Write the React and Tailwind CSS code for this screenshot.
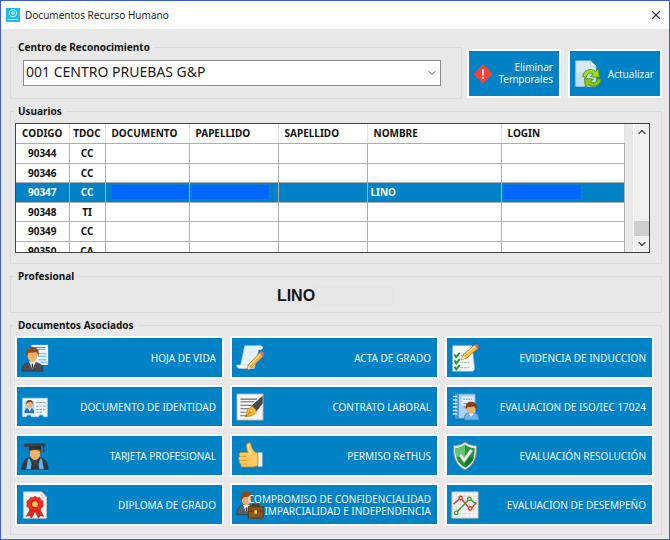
import { ChevronDown, ChevronUp, X } from 'lucide-react';

const COLUMNS = [
  { key: 'codigo', label: 'CODIGO', width: 'w-[53px]', head: 'text-center', cell: 'text-center' },
  { key: 'tdoc', label: 'TDOC', width: 'w-9', head: 'text-center', cell: 'text-center' },
  { key: 'documento', label: 'DOCUMENTO', width: 'w-[84px]', head: 'pl-1.5 text-left', cell: 'pl-1.5' },
  { key: 'papellido', label: 'PAPELLIDO', width: 'w-[89px]', head: 'pl-1.5 text-left', cell: 'pl-0.5' },
  { key: 'sapellido', label: 'SAPELLIDO', width: 'w-[89px]', head: 'pl-1.5 text-left', cell: 'pl-0.5' },
  { key: 'nombre', label: 'NOMBRE', width: 'w-[134px]', head: 'pl-1.5 text-left', cell: 'pl-[3px]' },
  { key: 'login', label: 'LOGIN', width: '', head: 'pl-1.5 text-left', cell: 'pl-0.5' },
];

const USERS = [
  { codigo: '90344', tdoc: 'CC' },
  { codigo: '90346', tdoc: 'CC' },
  { codigo: '90347', tdoc: 'CC', nombre: 'LINO', selected: true },
  { codigo: '90348', tdoc: 'TI' },
  { codigo: '90349', tdoc: 'CC' },
  { codigo: '90350', tdoc: 'CA' },
];

const MASKED = ['documento', 'papellido', 'login'];

function Icon({ children }) {
  return (
    <svg viewBox="0 0 32 32" className="size-7 shrink-0" aria-hidden="true">
      {children}
    </svg>
  );
}

function RefreshPageIcon() {
  return (
    <Icon>
      <path d="M2 1h17l6 6v23H2z" fill="#d9ebf8" stroke="#a9cbe4" />
      <path d="M19 1v6h6z" fill="#fff" stroke="#8fb6d4" strokeWidth=".7" />
      <path d="M2 14c8 2 14-2 23-1v17H2z" fill="#bcd9ee" opacity=".7" />
      <path d="M10 19c1-8 9-10 15-6l3-3 1 10-10-1 3-3c-4-2-7-1-8 4z" fill="#a5d92a" stroke="#4d8a10" />
      <path d="M31 22c-1 8-9 10-15 6l-3 3-1-10 10 1-3 3c4 2 7 1 8-4z" fill="#8ac61a" stroke="#4d8a10" />
    </Icon>
  );
}

function WarningIcon() {
  return (
    <svg viewBox="0 0 20 20" className="size-5 shrink-0" aria-hidden="true">
      <path d="M10 0.8 19.2 10 10 19.2 0.8 10z" fill="#f44336" stroke="#f44336" strokeLinejoin="round" />
      <path d="M9 5.2h2l-.3 6.2H9.3z" fill="#fff" />
      <circle cx="10" cy="13.8" r="1.1" fill="#fff" />
    </svg>
  );
}

function ResumeIcon() {
  return (
    <Icon>
      <path d="M12 1h19v23H12z" fill="#f1f9ff" />
      <path d="M15 4h13M15 6h13" stroke="#3aa3e8" strokeWidth="1.4" />
      <path d="M19 11h10M19 14h10M20 18h9M22 21h7" stroke="#7fc3f2" strokeWidth="1.6" />
      <path d="M1 31c0-7 3-9 8-10h8c5 1 8 3 8 10z" fill="#4a4d52" stroke="#2c2e31" strokeWidth=".7" />
      <path d="m9 20 4 9 4-9z" fill="#f4f4f4" />
      <path d="m13 22-1 2 1 6 1-6z" fill="#26282b" />
      <ellipse cx="13" cy="13" rx="5.5" ry="7.5" fill="#f0b26b" />
      <path d="M6 14C5 6 9 3 13 3s9 3 7 11c-1-2-2-4-3-5-3 1-6 1-8 1-1 1-2 2-3 4z" fill="#8a4b1c" />
    </Icon>
  );
}

function IdCardIcon() {
  return (
    <Icon>
      <path d="M2 6h28v21h-4l-1-2h-4l-1 2h-8l-1-2H7l-1 2H2z" fill="#eef7fd" stroke="#b9d6ea" />
      <path d="M4 9h11v14H4z" fill="#a9d5f3" />
      <path d="M4 23c0-5 2-6 5.5-6s5.5 1 5.5 6z" fill="#2474b5" />
      <path d="m8 17 2 4 2-4z" fill="#fff" />
      <circle cx="9.7" cy="13" r="3.3" fill="#efb172" />
      <path d="M6 13c0-4 1-5 4-5s4 2 3.5 5c-1-2-2-3-3-3-2 0-3 1-4.5 3z" fill="#7a431b" />
      <path d="M17 11h11M17 15h11M17 19h11M17 22h7" stroke="#7f9db5" strokeWidth="1.1" strokeDasharray="3 1" />
    </Icon>
  );
}

function GraduateIcon() {
  return (
    <Icon>
      <path d="M1 31c1-8 3-12 9-13h12c6 1 8 5 9 13z" fill="#34373b" stroke="#222" strokeWidth=".6" />
      <path d="M8 19 6 31h5l1-6-2-6zM24 19l2 12h-5l-1-6 2-6z" fill="#5db4ec" />
      <path d="m11 18 5 9 5-9z" fill="#3f4348" />
      <ellipse cx="16" cy="13" rx="6" ry="7.5" fill="#efb46c" />
      <path d="M9 14V6h14v8l-2-4c-3-1-7-1-10 0z" fill="#7e451b" />
      <path d="M9 4h14v5c-3-1-11-1-14 0z" fill="#2b2d30" />
      <path d="M3 2 27 1l1 3-24 2z" fill="#3c3f43" />
      <path d="M26 3v8" stroke="#333" strokeWidth="1.5" />
    </Icon>
  );
}

function DiplomaIcon() {
  return (
    <Icon>
      <path d="M3 1h21l5 6v24H3z" fill="#f5f5f3" stroke="#c9c9c9" />
      <path d="M24 1v6h5z" fill="#fff" stroke="#aaa" strokeWidth=".7" />
      <path d="m11 20-5 9 4-1 2 3 4-8 4 8 2-3 4 1-5-9z" fill="#e02619" stroke="#b51710" strokeWidth=".6" />
      <path
        d="m16 6 2.5 1.8 3-.3 1.3 2.8 2.6 1.5-.3 3 .3 3-2.6 1.5-1.3 2.8-3-.3L16 23.5l-2.5-1.7-3 .3-1.3-2.8L6.6 17.8l.3-3-.3-3 2.6-1.5 1.3-2.8 3 .3z"
        fill="#ee2e20"
        stroke="#c01a12"
        strokeWidth=".7"
      />
      <circle cx="16" cy="15" r="5" fill="#cf1f14" />
      <circle cx="16" cy="15" r="3.4" fill="#ffc43a" />
    </Icon>
  );
}

function ScrollIcon() {
  return (
    <Icon>
      <path d="M10 2h18c3 0 3 4 1 4h-3l-5 21H7l-2-2z" fill="#e4f2fb" stroke="#a8cce4" strokeWidth=".8" />
      <path d="M10 2h18c3 0 3 4 1 4h-4c2 0 1-4-1-4z" fill="#fff" />
      <path d="M1 24h16c0 3 1 4 4 4H5c-3 0-4-1-4-4z" fill="#fff" stroke="#a8cce4" strokeWidth=".8" />
      <path d="M11 9h11M10 13h9M9 17h7" stroke="#d3e8f5" />
      <path d="m12 30 2-6L27 10l4 4-13 13z" fill="#f8b440" stroke="#a86a1c" strokeWidth=".8" />
      <path d="m15 25 13-14" stroke="#ffe08e" strokeWidth="1.2" />
      <path d="m27 10 2-2 4 3-2 3z" fill="#e8697b" />
      <path d="m12 30 2-5 3 3z" fill="#f7dfb8" />
      <path d="m12 30 .8-2 1.2 1z" fill="#333" />
    </Icon>
  );
}

function ContractIcon() {
  return (
    <Icon>
      <path d="M1 1h30v30H1z" fill="#f6f6f6" stroke="#9a9a9a" />
      <path d="M5 7h19M5 10h16M5 14h14M5 18h11M5 22h6M5 26h7" stroke="#686868" strokeWidth="1.3" />
      <path d="m18 15 12-11v8l-7 9z" fill="#45484c" stroke="#26282a" strokeWidth=".7" />
      <path d="m11 27 2-8 6-4 5 6-5 5z" fill="#fbb62d" stroke="#b97913" strokeWidth=".8" />
      <path d="m11 27 6-6" stroke="#9a6410" />
      <circle cx="17.5" cy="20.5" r="1.2" fill="#fff" />
    </Icon>
  );
}

function ThumbIcon() {
  return (
    <Icon>
      <path d="M25 12h5v16h-5z" fill="#eef1f4" stroke="#aeb7c0" strokeWidth=".7" />
      <path
        d="M25 13c-4-1-7-4-8-11-1-2-5-1-5 2 0 4 1 6 2 8H6c-3 0-3 4-1 4.5-3 .5-3 4 0 4.5-2 .5-2 3.500 1 4-1 1-1 3.500 2 3.500h11c3 0 4-1.500 6-1.500z"
        fill="#ffc95e"
        stroke="#d3892a"
        strokeWidth=".8"
      />
      <path d="M5 16.5h7M5 21h7M6 25h6" stroke="#dc9634" strokeWidth=".9" />
      <path d="M14 3c0 5 2 8 4 11" stroke="#ffe6a6" strokeWidth="1.6" fill="none" />
    </Icon>
  );
}

function BusinessIcon() {
  return (
    <Icon>
      <path d="M1 27c0-7 2-9 7-11h8c5 2 7 4 7 11z" fill="#55606e" stroke="#333" strokeWidth=".7" />
      <path d="m8 16 4 9 4-9z" fill="#f5f5f5" />
      <path d="m12 18-1 2 1 6 1-6z" fill="#30343a" />
      <ellipse cx="12" cy="9.5" rx="5.5" ry="7" fill="#efae68" />
      <path d="M6 11C4 4 8 0 12 0s9 4 6 11c-1-2-1-4-2-5-3 1-5 1-7 1-1 1-2 2-3 4z" fill="#8b4a1d" />
      <path d="M19 19v-3h7v3" fill="none" stroke="#5a3211" strokeWidth="1.6" />
      <path d="M14 18h17v13H14z" fill="#8d5420" stroke="#59310f" />
      <path d="M14 23h17" stroke="#59310f" />
      <path d="M21 22h3v4h-3z" fill="#ffc83f" />
    </Icon>
  );
}

function ChecklistIcon() {
  return (
    <Icon>
      <path d="M2 2h22l3 27-2 2H2z" fill="#f8f8f6" stroke="#bdbdbd" strokeWidth=".8" />
      <path d="M11 13h8M11 21h10M11 27h10" stroke="#b8b8b8" strokeWidth="1.2" strokeDasharray="3 1" />
      <path d="m4 12 2 3 4-5M4 19l2 3 4-5M4 26l2 3 4-5" fill="none" stroke="#159a2b" strokeWidth="2.2" />
      <path d="m12 18 2-6L27 1l4 4-13 11z" fill="#f9b744" stroke="#a3691d" strokeWidth=".8" />
      <path d="M15 13 28 2" stroke="#ffe394" strokeWidth="1.2" />
      <path d="m27 1 2-1 3 3-1 2z" fill="#e36a55" />
      <path d="m12 18 2-5 3 3z" fill="#f7dfb8" />
    </Icon>
  );
}

function NotebookIcon() {
  return (
    <Icon>
      <path d="M5 1h23v28H5z" fill="#a9d3f2" stroke="#4e8ec2" />
      <path d="M5 1h4v28H5z" fill="#4b95d1" />
      <path d="M12 4h14v10H12z" fill="#e2f2fd" />
      <path d="M14 7h10" stroke="#3480bb" strokeDasharray="2 1" />
      <path d="M14 12h4M14 16h3" stroke="#e05b4c" strokeWidth="1.2" />
      <path d="M2 4h5M2 8h5M2 12h5M2 16h5M2 20h5M2 24h5" stroke="#dcebf6" strokeWidth="1.6" />
      <path d="M15 31c0-6 2-8 5-8h6c4 0 6 2 6 8z" fill="#69b5ea" stroke="#2d73ab" strokeWidth=".8" />
      <path d="m20 23 3 4 3-4z" fill="#fff" />
      <ellipse cx="23" cy="17.5" rx="5" ry="6" fill="#efb06c" />
      <path d="M17 19c-1-7 2-9 6-9s8 3 6 9c-1-2-2-3-3-4-2 1-4 1-6 1-1 0-2 1-3 3z" fill="#82461a" />
    </Icon>
  );
}

function ShieldIcon() {
  return (
    <Icon>
      <path d="M16 0c4 3 8 4 13 4 1 14-3 23-13 28C6 27 2 18 3 4c5 0 9-1 13-4z" fill="#dfe5e2" stroke="#7d8985" />
      <path d="M16 3c3 2 7 4 11 4 0 11-3 18-11 22C8 25 5 18 5 7c4 0 8-2 11-4z" fill="#23943a" />
      <path d="M16 3v14H6C5 14 5 10 5 7c4 0 8-2 11-4z" fill="#64c36d" />
      <path d="M16 17h10c-1 6-5 9-10 12z" fill="#137a2a" />
      <path d="m9 15 3-2 3 5 7-10 3 2-10 14z" fill="#f5f7f6" stroke="#8ba294" strokeWidth=".7" />
    </Icon>
  );
}

function ChartIcon() {
  return (
    <Icon>
      <path d="M1 1h30v30H1z" fill="#f7f7f7" stroke="#b3b3b3" />
      <path d="M6 1v30M11 1v30M16 1v30M21 1v30M26 1v30M1 6h30M1 11h30M1 16h30M1 21h30M1 26h30" stroke="#d9d9d9" strokeWidth=".8" />
      <path d="m3 15 8-7 11 13 7-8" fill="none" stroke="#e23a36" strokeWidth="1.7" />
      <path d="m6 25 15-16 8 6" fill="none" stroke="#3a9f32" strokeWidth="1.7" />
      <g fill="#f7f7f7" strokeWidth="1.5">
        <circle cx="11" cy="8" r="2" stroke="#e23a36" />
        <circle cx="22" cy="20" r="2" stroke="#e23a36" />
        <circle cx="6" cy="25" r="2" stroke="#3a9f32" />
        <circle cx="21" cy="9" r="2" stroke="#3a9f32" />
      </g>
    </Icon>
  );
}

const DOCUMENTS = [
  { label: 'HOJA DE VIDA', icon: ResumeIcon },
  { label: 'ACTA DE GRADO', icon: ScrollIcon },
  { label: 'EVIDENCIA DE INDUCCION', icon: ChecklistIcon },
  { label: 'DOCUMENTO DE IDENTIDAD', icon: IdCardIcon },
  { label: 'CONTRATO LABORAL', icon: ContractIcon },
  { label: 'EVALUACION DE ISO/IEC 17024', icon: NotebookIcon },
  { label: 'TARJETA PROFESIONAL', icon: GraduateIcon },
  { label: 'PERMISO ReTHUS', icon: ThumbIcon },
  { label: 'EVALUACIÓN RESOLUCIÓN', icon: ShieldIcon },
  { label: 'DIPLOMA DE GRADO', icon: DiplomaIcon },
  { label: 'COMPROMISO DE CONFIDENCIALIDAD\nIMPARCIALIDAD E INDEPENDENCIA', icon: BusinessIcon },
  { label: 'EVALUACION DE DESEMPEÑO', icon: ChartIcon },
];

function Group({ title, className = '', bodyClassName = '', children }) {
  return (
    <fieldset className={`min-w-0 border border-[#dcdcdc] ${className}`}>
      <legend className="ml-[3px] px-1 text-[10px] leading-[14px] font-bold text-[#111]">{title}</legend>
      <div className={bodyClassName}>{children}</div>
    </fieldset>
  );
}

function TitleBar() {
  return (
    <header className="flex h-7 items-center bg-white pr-1.5 pl-[5px]">
      <svg viewBox="0 0 14 14" className="size-3.5" aria-hidden="true">
        <path d="M0 0h14v14H0z" fill="#1cbcf2" />
        <circle cx="7" cy="5.2" r="3.7" fill="none" stroke="#c8f2ff" />
        <path d="M7 3.2v4M5.4 4.5c0 2 3.2 2 3.2 0M2 11.5h10" fill="none" stroke="#e6f9ff" />
      </svg>
      <h1 className="ml-[5px] flex-1 text-[10px] text-[#1b1b1b]">Documentos Recurso Humano</h1>
      <button type="button" aria-label="Cerrar" className="text-[#333]">
        <X size={14} strokeWidth={2} />
      </button>
    </header>
  );
}

function UsersTable() {
  return (
    <div className="flex h-[130px] overflow-hidden border border-[#444] bg-[#e8e8e8]">
      <div className="min-w-0 flex-1">
        <table className="w-full table-fixed border-collapse bg-white text-[10px] leading-3 font-bold text-[#111]">
          <thead>
            <tr className="h-[19px]">
              {COLUMNS.map((col) => (
                <th
                  key={col.key}
                  scope="col"
                  className={`border-r border-b border-r-[#e3e3e3] border-b-[#adadad] ${col.width} ${col.head}`}
                >
                  {col.label}
                </th>
              ))}
            </tr>
          </thead>
          <tbody>
            {USERS.map((user) => (
              <tr key={user.codigo} className={`h-5 even:h-[19px] ${user.selected ? 'bg-[#0082c6] text-white' : ''}`}>
                {COLUMNS.map((col) => (
                  <td key={col.key} className={`border-r border-b border-[#adadad] ${col.cell}`}>
                    {user.selected && MASKED.includes(col.key) ? (
                      <span className="block h-3.5 w-[77px] max-w-full bg-[#0066ff]" />
                    ) : (
                      user[col.key]
                    )}
                  </td>
                ))}
              </tr>
            ))}
          </tbody>
        </table>
      </div>
      <div className="ml-2 flex w-4 flex-col items-center border-l border-white bg-[#f0f0f0] text-[#555]">
        <ChevronUp size={12} strokeWidth={3} className="mt-0.5" />
        <div className="mt-auto h-[15px] w-full bg-[#cdcdcd]" />
        <ChevronDown size={12} strokeWidth={3} className="my-0.5" />
      </div>
    </div>
  );
}

const tile = 'flex items-center justify-between border-2 border-white bg-[#0082c6] text-right text-[10px] leading-3 text-[#f2f9fd]';

export default function App() {
  return (
    <div className="min-h-screen border border-[#3f5ccc] bg-[#e8e8e8] font-['Noto_Sans',sans-serif]">
      <TitleBar />
      <main className="flex flex-col gap-[5px] pt-[11px] pr-[7px] pb-1 pl-[9px]">
        <div className="flex items-end gap-[5px]">
          <Group title="Centro de Reconocimiento" className="flex-1" bodyClassName="pt-1.5 pr-5 pb-3 pl-3">
            <div className="relative">
              <select
                aria-label="Centro de Reconocimiento"
                className="block h-[26px] w-full appearance-none border border-[#8a8a8a] bg-white pb-0.5 pl-0.5 text-[14px] leading-5 text-[#1b1b1b]"
              >
                <option>001 CENTRO PRUEBAS G&amp;P</option>
              </select>
              <ChevronDown
                size={12}
                strokeWidth={2}
                className="pointer-events-none absolute top-[7px] right-[3px] text-[#555]"
              />
            </div>
          </Group>
          <div className="flex gap-[7px] pb-px">
            <button type="button" className={`${tile} h-[49px] w-[94px] pr-1.5 pl-1`}>
              <WarningIcon />
              <span className="pb-0.5">Eliminar Temporales</span>
            </button>
            <button type="button" className={`${tile} h-[49px] w-[94px] pr-1.5 pl-1`}>
              <RefreshPageIcon />
              Actualizar
            </button>
          </div>
        </div>

        <Group title="Usuarios" bodyClassName="pt-[5px] pr-[11px] pb-2.5 pl-1">
          <UsersTable />
        </Group>

        <Group title="Profesional" bodyClassName="pt-[3px] pb-1.5">
          <p className="flex items-center justify-center font-['Liberation_Sans',sans-serif] text-[16px] leading-5 font-bold text-[#111]">
            LINO
            <span className="h-5 w-20 bg-[#e6e6e6]" />
          </p>
        </Group>

        <Group title="Documentos Asociados" bodyClassName="pt-1 pr-[7px] pb-2 pl-1">
          <div className="grid grid-cols-3 gap-1.5">
            {DOCUMENTS.map(({ label, icon: DocIcon }) => (
              <button key={label} type="button" className={`${tile} h-[43px] pr-1.5 pl-1`}>
                <DocIcon />
                <span className="-ml-4 whitespace-pre">{label}</span>
              </button>
            ))}
          </div>
        </Group>
      </main>
    </div>
  );
}
